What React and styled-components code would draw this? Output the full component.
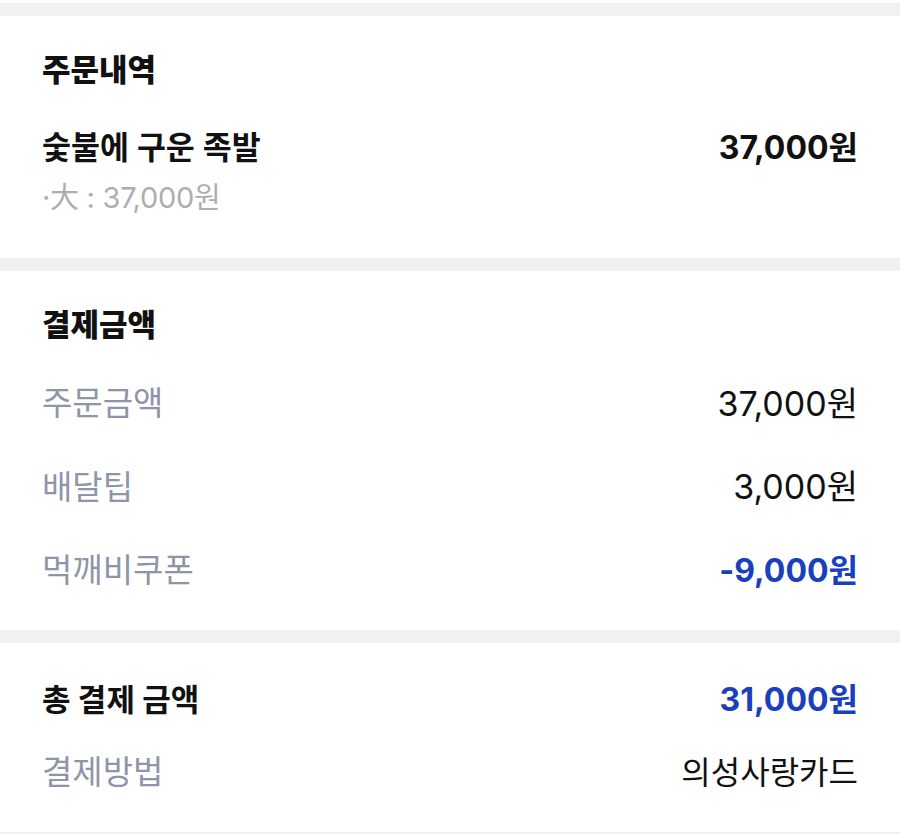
import React from 'react';
import styled, { createGlobalStyle } from 'styled-components';

const GlobalStyle = createGlobalStyle`
  html, body {
    margin: 0;
    padding: 0;
    background: #ffffff;
  }
  body {
    font-family: Inter, "Noto Sans CJK KR", sans-serif;
    color: #111;
    -webkit-font-smoothing: antialiased;
  }
`;

const Page = styled.div`
  display: flex;
  flex-direction: column;
  width: 900px;
  padding-top: 3px;
  border-bottom: 2px solid #efefef;
`;

// grey band between cards
const Divider = styled.div`
  height: 13px;
  background: #f1f1f1;
`;

const Section = styled.section`
  display: flex;
  flex-direction: column;
  padding: 34px 42px 42px;
  background: #fff;
`;

const Title = styled.h2`
  margin: 0;
  height: 40px;
  line-height: 40px;
  font-size: 31px;
  font-weight: 800;
  color: #111;
`;

const Row = styled.div`
  display: flex;
  justify-content: space-between;
  align-items: center;
  height: 40px;
  margin-top: ${(p) => p.$space}px;
`;

const Label = styled.span`
  font-size: ${(p) => (p.$strong ? 31 : 33)}px;
  font-weight: ${(p) => (p.$strong ? 700 : 400)};
  color: ${(p) => (p.$strong ? '#111' : '#8f95a9')};
`;

const ItemName = styled(Label)`
  font-size: 31.5px;
  font-weight: 600;
`;

const Value = styled.span`
  font-size: ${(p) => (p.$strong ? 32 : 34)}px;
  font-weight: ${(p) => (p.$strong ? 700 : 400)};
  color: ${(p) => (p.$blue ? '#1a40bd' : '#111')};
`;

const MethodValue = styled.span`
  font-size: 32px;
  color: #111;
`;

const SubText = styled.div`
  margin-top: 15px;
  height: 36px;
  line-height: 36px;
  font-size: 29px;
  letter-spacing: -0.3px;
  color: #aeaeae;
`;

function App() {
  const payRows = [
    { label: '주문금액', value: '37,000원' },
    { label: '배달팁', value: '3,000원' },
    { label: '먹깨비쿠폰', value: '-9,000원', blue: true },
  ];

  return (
    <>
      <GlobalStyle />
      <Page>
        <Divider />
        <Section>
          <Title>주문내역</Title>
          <Row $space={35}>
            <ItemName $strong>숯불에 구운 족발</ItemName>
            <Value $strong>37,000원</Value>
          </Row>
          <SubText>·大 : 37,000원</SubText>
        </Section>

        <Divider />
        <Section>
          <Title>결제금액</Title>
          {payRows.map((row, i) => (
            <Row key={row.label} $space={i === 0 ? 36 : 43.5}>
              <Label>{row.label}</Label>
              <Value $blue={row.blue} $strong={row.blue}>{row.value}</Value>
            </Row>
          ))}
        </Section>

        <Divider />
        <Section>
          <Row $space={0}>
            <Label $strong>총 결제 금액</Label>
            <Value $strong $blue>31,000원</Value>
          </Row>
          <Row $space={33}>
            <Label>결제방법</Label>
            <MethodValue>의성사랑카드</MethodValue>
          </Row>
        </Section>
      </Page>
    </>
  );
}

export default App;
